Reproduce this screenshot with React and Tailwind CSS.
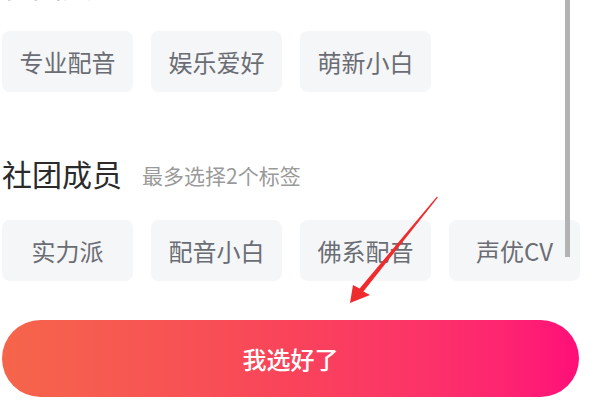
import React from "react";

const row1 = ["专业配音", "娱乐爱好", "萌新小白"];
const row2 = ["实力派", "配音小白", "佛系配音", "声优CV"];

const Tag = ({ label }) => (
  <div className="w-[131px] h-[61px] shrink-0 rounded-[8px] bg-[#f5f6f8] flex items-center justify-center text-[24px] text-[#6a6d73]">
    {label}
  </div>
);

const SectionTitle = ({ title, hint, className }) => (
  <div className={`h-[40px] flex items-center gap-[20px] ${className}`}>
    <span className="text-[30px] text-[#2b2b2b] leading-none">{title}</span>
    <span className="text-[21px] text-[#9a9a9a] leading-none mt-[4px]">{hint}</span>
  </div>
);

const App = () => {
  return (
    <div
      className="relative w-[600px] h-[402px] overflow-hidden bg-white"
      style={{ fontFamily: '"Noto Sans CJK SC", "Noto Sans", sans-serif' }}
    >
      <div className="flex flex-col pl-[2px]">
        <SectionTitle title="社团类型" hint="最多选择2个标签" className="mt-[-36px]" />
        <div className="flex gap-[18px] mt-[27px]">
          {row1.map((t) => (
            <Tag key={t} label={t} />
          ))}
        </div>

        <SectionTitle title="社团成员" hint="最多选择2个标签" className="mt-[61px]" />
        <div className="flex gap-[18px] mt-[27px]">
          {row2.map((t) => (
            <Tag key={t} label={t} />
          ))}
        </div>

        <button className="mt-[39px] w-[577px] h-[77px] rounded-full bg-gradient-to-r from-[#f5654a] via-[#f9435a] to-[#ff0d78] text-white text-[24px] font-medium flex items-center justify-center">
          我选好了
        </button>
      </div>

      {/* scrollbar */}
      <div className="absolute left-[565px] top-0 w-[5px] h-[257px] bg-[#b3b3b3]" />

      {/* red annotation arrow */}
      <svg className="absolute inset-0 pointer-events-none" width="600" height="402">
        <polygon
          points="437,196.5 437.8,197.4 363.4,291.6 370,295 350,303 353,285 359.6,288.4"
          fill="#ef2b2d"
        />
      </svg>
    </div>
  );
};

export default App;
